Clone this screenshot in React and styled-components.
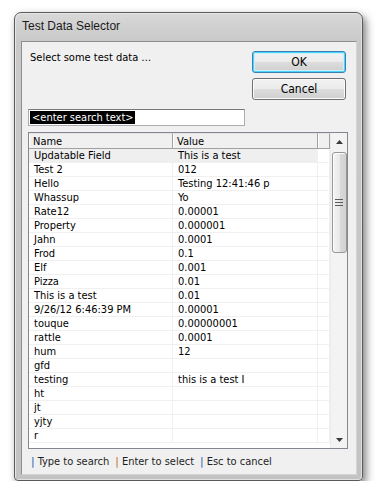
import React from "react";
import styled, { createGlobalStyle } from "styled-components";

const GlobalStyle = createGlobalStyle`
  html, body { margin: 0; padding: 0; background: #ffffff; }
  body { font-family: "Liberation Sans", Arial, sans-serif; color: #000; }
`;

const uiFont = `"DejaVu Sans Condensed", "Liberation Sans", sans-serif`;

const Page = styled.div`
  padding: 12px 0 0 14px;
`;

const Window = styled.div`
  box-sizing: border-box;
  width: 349px;
  height: 469px;
  border: 1px solid #5b5b5b;
  border-radius: 7px 7px 4px 4px;
  background: linear-gradient(to bottom, #d8d8d8 0px, #c9c9c9 28px, #c3c3c3 100%);
  box-shadow: 3px 4px 9px rgba(0, 0, 0, 0.5), inset 1px 1px 0 #e6e6e6, inset -1px -1px 0 #e0e0e0;
  display: flex;
  flex-direction: column;
  padding: 0 5px 5px 6px;
`;

const TitleBar = styled.div`
  height: 28px;
  display: flex;
  align-items: center;
  padding-left: 1px;
  padding-bottom: 2px;
  box-sizing: border-box;
  font-size: 12px;
  color: #1a1a1a;
`;

const Client = styled.div`
  flex: 1;
  box-sizing: border-box;
  border: 1px solid #8e8e8e;
  border-right-color: #d4d4d4;
  border-bottom-color: #d4d4d4;
  background: #f0f0f0;
  display: flex;
  flex-direction: column;
  padding: 9px 8px 0 6px;
  font-family: ${uiFont};
  font-size: 11px;
`;

const TopRow = styled.div`
  display: flex;
  justify-content: space-between;
  align-items: flex-start;
`;

const Prompt = styled.div`
  margin: 0 0 0 2px;
  line-height: 13px;
`;

const ButtonColumn = styled.div`
  display: flex;
  flex-direction: column;
  gap: 5px;
  margin-right: 2px;
`;

const Button = styled.div`
  box-sizing: border-box;
  width: 94px;
  height: 22px;
  border-radius: 3px;
  border: 1px solid ${(p) => (p.$default ? "#3c7fb1" : "#707070")};
  background: linear-gradient(to bottom, #f2f2f2 0%, #ebebeb 50%, #dddddd 51%, #cfcfcf 100%);
  box-shadow: ${(p) =>
    p.$default ? "inset 0 0 0 1px #48d5fd, inset 0 0 0 2px #cdeefb" : "inset 0 0 0 1px #fbfbfb"};
  display: flex;
  align-items: center;
  justify-content: center;
  font-size: 12px;
  color: #000;
`;

const SearchBox = styled.div`
  box-sizing: border-box;
  margin-top: 9px;
  width: 217px;
  height: 17px;
  border: 1px solid #abadb3;
  border-top-color: #7a7a7a;
  background: #fff;
  padding: 1px 1px;
  display: flex;
  align-items: center;
`;

const Selected = styled.span`
  background: #000;
  color: #fff;
  font-size: 11px;
  line-height: 13px;
  padding: 0 1px 0 2px;
`;

const ListBox = styled.div`
  box-sizing: border-box;
  margin-top: 6px;
  height: 317px;
  border: 1px solid #828790;
  background: #fff;
  display: flex;
`;

const Table = styled.div`
  flex: 1;
  display: flex;
  flex-direction: column;
  overflow: hidden;
`;

const cols = "144px 145px 12px";

const HeaderRow = styled.div`
  display: grid;
  grid-template-columns: ${cols};
  height: 16px;
`;

const HeaderCell = styled.div`
  box-sizing: border-box;
  background: #f0f0f0;
  border-top: 1px solid #e3e3e3;
  border-bottom: 1px solid #a0a0a0;
  border-right: 1px solid #a0a0a0;
  box-shadow: inset 1px 0 0 #ffffff;
  padding-left: 4px;
  display: flex;
  align-items: center;
  font-size: 11px;
  line-height: 13px;
`;

const Row = styled.div`
  display: grid;
  grid-template-columns: ${cols};
  height: 14px;
`;

const Cell = styled.div`
  box-sizing: border-box;
  border-bottom: 1px solid #f0f0f0;
  border-right: 1px solid #f0f0f0;
  background: ${(p) => (p.$selected ? "#efefef" : "#fff")};
  padding-left: 5px;
  font-size: 11px;
  line-height: 13px;
  white-space: nowrap;
  overflow: hidden;
`;

const Scrollbar = styled.div`
  width: 17px;
  background: #f3f3f3;
  border-left: 1px solid #ebebeb;
  box-sizing: border-box;
  display: flex;
  flex-direction: column;
  align-items: center;
`;

const ArrowBtn = styled.div`
  height: 17px;
  width: 100%;
  display: flex;
  align-items: center;
  justify-content: center;
`;

const Track = styled.div`
  flex: 1;
  width: 100%;
  display: flex;
  flex-direction: column;
  align-items: center;
`;

const Thumb = styled.div`
  box-sizing: border-box;
  margin-top: 2px;
  width: 15px;
  height: 101px;
  border: 1px solid #979797;
  border-radius: 3px;
  background: linear-gradient(to right, #f4f4f4 0%, #e9e9e9 50%, #d9d9d9 51%, #d2d2d2 100%);
  box-shadow: inset 1px 1px 0 #fdfdfd;
  display: flex;
  align-items: center;
  justify-content: center;
`;

const StatusBar = styled.div`
  flex: 1;
  display: flex;
  align-items: center;
  padding-left: 3px;
  padding-bottom: 1px;
  font-size: 11px;
  color: #1e1e1e;
  white-space: pre;
`;

const Pipe = styled.span`
  color: ${(p) => p.$color};
  font-weight: bold;
  margin-right: 3px;
`;

const Hint = styled.span`
  margin-right: 6px;
`;

const rows = [
  ["Updatable Field", "This is a test"],
  ["Test 2", "012"],
  ["Hello", "Testing 12:41:46 p"],
  ["Whassup", "Yo"],
  ["Rate12", "0.00001"],
  ["Property", "0.000001"],
  ["Jahn", "0.0001"],
  ["Frod", "0.1"],
  ["Elf", "0.001"],
  ["Pizza", "0.01"],
  ["This is a test", "0.01"],
  ["9/26/12 6:46:39 PM", "0.00001"],
  ["touque", "0.00000001"],
  ["rattle", "0.0001"],
  ["hum", "12"],
  ["gfd", ""],
  ["testing", "this is a test I"],
  ["ht", ""],
  ["jt", ""],
  ["yjty", ""],
  ["r", ""],
];

const UpArrow = () => (
  <svg width="7" height="4" viewBox="0 0 7 4">
    <path d="M0 4 L3.5 0 L7 4 Z" fill="#3a3a3a" />
  </svg>
);
const DownArrow = () => (
  <svg width="7" height="4" viewBox="0 0 7 4">
    <path d="M0 0 L3.5 4 L7 0 Z" fill="#3a3a3a" />
  </svg>
);
const Grip = () => (
  <svg width="8" height="7" viewBox="0 0 8 7">
    <path d="M0 0.5 H8 M0 3.5 H8 M0 6.5 H8" stroke="#5a5a5a" strokeWidth="1" />
  </svg>
);

export default function App() {
  return (
    <>
      <GlobalStyle />
      <Page>
        <Window>
          <TitleBar>Test Data Selector</TitleBar>
          <Client>
            <TopRow>
              <Prompt>Select some test data …</Prompt>
              <ButtonColumn>
                <Button $default>OK</Button>
                <Button>Cancel</Button>
              </ButtonColumn>
            </TopRow>
            <SearchBox>
              <Selected>&lt;enter search text&gt;</Selected>
            </SearchBox>
            <ListBox>
              <Table>
                <HeaderRow>
                  <HeaderCell>Name</HeaderCell>
                  <HeaderCell>Value</HeaderCell>
                  <HeaderCell />
                </HeaderRow>
                {rows.map(([n, v], i) => (
                  <Row key={i}>
                    <Cell $selected={i === 0}>{n}</Cell>
                    <Cell $selected={i === 0}>{v}</Cell>
                    <Cell />
                  </Row>
                ))}
              </Table>
              <Scrollbar>
                <ArrowBtn>
                  <UpArrow />
                </ArrowBtn>
                <Track>
                  <Thumb>
                    <Grip />
                  </Thumb>
                </Track>
                <ArrowBtn>
                  <DownArrow />
                </ArrowBtn>
              </Scrollbar>
            </ListBox>
            <StatusBar>
              <Pipe $color="#4a7ebb">|</Pipe>
              <Hint>Type to search</Hint>
              <Pipe $color="#c8894a">|</Pipe>
              <Hint>Enter to select</Hint>
              <Pipe $color="#4a7ebb">|</Pipe>
              <Hint>Esc to cancel</Hint>
            </StatusBar>
          </Client>
        </Window>
      </Page>
    </>
  );
}
